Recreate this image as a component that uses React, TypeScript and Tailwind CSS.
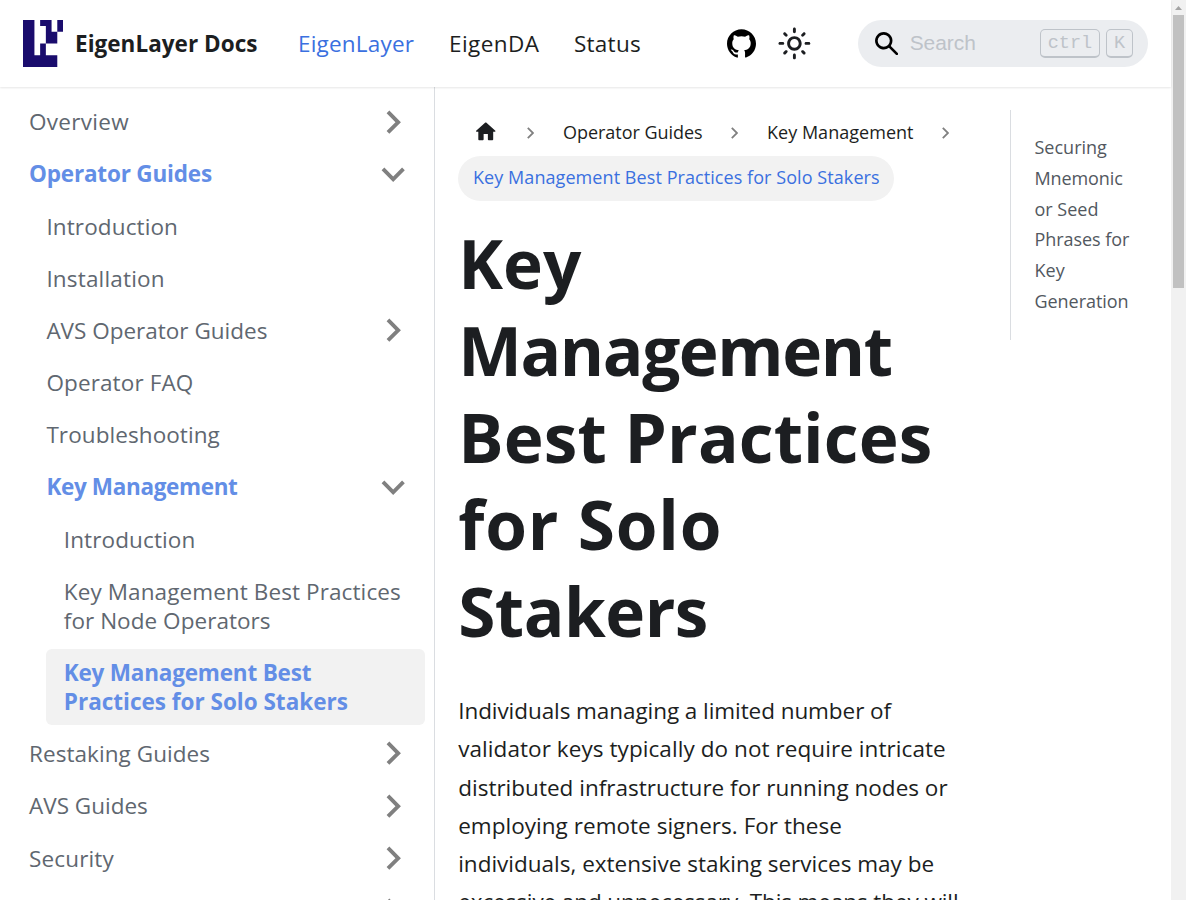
import React from "react";
import { SiGithub } from "react-icons/si";

type Item = {
  lines: [string, string][];
  indent: string;
  caret?: "right" | "down";
  active?: boolean;
  selected?: boolean;
};

const items: Item[] = [
  { lines: [["Overview", "tracking-[0.3px]"]], indent: "ml-[11.6px]", caret: "right" },
  { lines: [["Operator Guides", "tracking-[-0.18px]"]], indent: "ml-[11.6px]", caret: "down", active: true },
  { lines: [["Introduction", "tracking-[0.12px]"]], indent: "ml-[29px]" },
  { lines: [["Installation", "tracking-[0.17px]"]], indent: "ml-[29px]" },
  { lines: [["AVS Operator Guides", "tracking-[0px]"]], indent: "ml-[29px]", caret: "right" },
  { lines: [["Operator FAQ", "tracking-[0.12px]"]], indent: "ml-[29px]" },
  { lines: [["Troubleshooting", "tracking-[0.08px]"]], indent: "ml-[29px]" },
  { lines: [["Key Management", "tracking-[-0.35px]"]], indent: "ml-[29px]", caret: "down", active: true },
  { lines: [["Introduction", "tracking-[0.12px]"]], indent: "ml-[46.4px]" },
  {
    lines: [
      ["Key Management Best Practices", "tracking-[0.1px]"],
      ["for Node Operators", "tracking-[0.05px]"],
    ],
    indent: "ml-[46.4px]",
  },
  {
    lines: [
      ["Key Management Best", "tracking-[-0.2px]"],
      ["Practices for Solo Stakers", "tracking-[0px]"],
    ],
    indent: "ml-[46.4px]",
    active: true,
    selected: true,
  },
  { lines: [["Restaking Guides", "tracking-[0.06px]"]], indent: "ml-[11.6px]", caret: "right" },
  { lines: [["AVS Guides", "tracking-[0px]"]], indent: "ml-[11.6px]", caret: "right" },
  { lines: [["Security", "tracking-[0.15px]"]], indent: "ml-[11.6px]", caret: "right" },
  { lines: [["\u00a0", "tracking-[0px]"]], indent: "ml-[11.6px]", caret: "right" },
];

const heading: [string, string][] = [
  ["Key", "tracking-[0px]"],
  ["Management", "tracking-[-1.4px]"],
  ["Best Practices", "tracking-[0.15px]"],
  ["for Solo", "tracking-[0.85px]"],
  ["Stakers", "tracking-[-0.5px]"],
];

const paragraph: [string, string][] = [
  ["Individuals managing a limited number of", "tracking-[-0.07px]"],
  ["validator keys typically do not require intricate", "tracking-[0.07px]"],
  ["distributed infrastructure for running nodes or", "tracking-[0.01px]"],
  ["employing remote signers. For these", "tracking-[0.03px]"],
  ["individuals, extensive staking services may be", "tracking-[0px]"],
  ["excessive and unnecessary. This means they will", "tracking-[-0.1px]"],
];

const toc: [string, string][] = [
  ["Securing", "tracking-[0px]"],
  ["Mnemonic", "tracking-[-0.1px]"],
  ["or Seed", "tracking-[0px]"],
  ["Phrases for", "tracking-[-0.05px]"],
  ["Key", "tracking-[0.1px]"],
  ["Generation", "tracking-[-0.05px]"],
];

function Lines({ lines }: { lines: [string, string][] }) {
  return (
    <>
      {lines.map(([text, tracking]) => (
        <span key={text} className={`block whitespace-nowrap ${tracking}`}>
          {text}
        </span>
      ))}
    </>
  );
}

function Logo() {
  return (
    <svg className="h-[47px] w-10 shrink-0" viewBox="0 0 7 8" preserveAspectRatio="none" fill="#1a0c6d">
      <path d="M0 0H2V6H3V4H4V6H6V8H0Z M3 0H5V2H6V4H4V1H3Z M6 0H7V2H6Z" />
    </svg>
  );
}

function Caret({ direction }: { direction: "right" | "down" }) {
  return (
    <svg
      className={`-my-2 mr-[8.8px] size-[46.4px] shrink-0 ${direction === "right" ? "rotate-90" : "rotate-180"}`}
      viewBox="0 0 24 24"
      fill="#808080"
    >
      <path d="M7.41 15.41L12 10.83l4.59 4.58L18 14l-6-6-6 6z" />
    </svg>
  );
}

function Sun() {
  return (
    <svg className="size-[34.8px]" viewBox="0 0 24 24" fill="#1c1e21">
      <path d="M12,9c1.65,0,3,1.35,3,3s-1.35,3-3,3s-3-1.35-3-3S10.35,9,12,9 M12,7c-2.76,0-5,2.24-5,5s2.24,5,5,5s5-2.24,5-5 S14.76,7,12,7L12,7z M2,13l2,0c0.55,0,1-0.45,1-1s-0.45-1-1-1l-2,0c-0.55,0-1,0.45-1,1S1.45,13,2,13z M20,13l2,0c0.55,0,1-0.45,1-1 s-0.45-1-1-1l-2,0c-0.55,0-1,0.45-1,1S19.45,13,20,13z M11,2v2c0,0.55,0.45,1,1,1s1-0.45,1-1V2c0-0.55-0.45-1-1-1S11,1.45,11,2z M11,20v2c0,0.55,0.45,1,1,1s1-0.45,1-1v-2c0-0.55-0.45-1-1-1C11.45,19,11,19.45,11,20z M5.99,4.58c-0.39-0.39-1.03-0.39-1.41,0 c-0.39,0.39-0.39,1.03,0,1.41l1.06,1.06c0.39,0.39,1.03,0.39,1.41,0s0.39-1.03,0-1.41L5.99,4.58z M18.36,16.95 c-0.39-0.39-1.03-0.39-1.41,0c-0.39,0.39-0.39,1.03,0,1.41l1.06,1.06c0.39,0.39,1.03,0.39,1.41,0c0.39-0.39,0.39-1.03,0-1.41 L18.36,16.95z M19.42,5.99c0.39-0.39,0.39-1.03,0-1.41c-0.39-0.39-1.03-0.39-1.41,0l-1.06,1.06c-0.39,0.39-0.39,1.03,0,1.41 s1.03,0.39,1.41,0L19.42,5.99z M7.05,18.36c0.39-0.39,0.39-1.03,0-1.41c-0.39-0.39-1.03-0.39-1.41,0l-1.06,1.06 c-0.39,0.39-0.39,1.03,0,1.41s1.03,0.39,1.41,0L7.05,18.36z" />
    </svg>
  );
}

function SearchIcon() {
  return (
    <svg className="size-[23.2px] shrink-0" viewBox="0 0 16 16">
      <path d="M6.02945,10.20327a4.17382,4.17382,0,1,1,4.17382-4.17382A4.15609,4.15609,0,0,1,6.02945,10.20327Zm9.69195,4.2199L10.8989,9.59979A5.88021,5.88021,0,0,0,12.058,6.02856,6.00467,6.00467,0,1,0,9.59979,10.8989l4.82338,4.82338a.89729.89729,0,0,0,1.29912,0,.89749.89749,0,0,0-.00087-1.29909Z" />
    </svg>
  );
}

function Separator() {
  return (
    <svg className="h-[12px] w-[7px] shrink-0" viewBox="0 0 7 12" fill="none" stroke="#808080" strokeWidth="1.8">
      <path d="M0.8 0.8L6 6L0.8 11.2" />
    </svg>
  );
}

const kbd =
  "flex h-[29px] items-center justify-center rounded-[5px] border border-b-2 border-[#bec3c9] pt-px font-['Liberation_Mono',monospace] text-[18.56px] text-[#bec3c9]";

export default function App() {
  return (
    <div className="flex h-[900px] w-full overflow-hidden bg-white font-['Open_Sans',sans-serif] text-[22.5px] text-[#1c1e21] antialiased">
      <div className="flex min-w-0 flex-1 flex-col">
        <header className="relative z-10 flex h-[87px] shrink-0 items-center bg-white pl-[23px] pr-[23px] shadow-[0_1px_2px_0_rgba(0,0,0,0.1)]">
          <Logo />
          <b className="ml-[12px] w-[221px] whitespace-nowrap font-bold tracking-[0.03px]">EigenLayer Docs</b>
          <nav className="flex">
            <a className="w-[153px] pl-[2px] tracking-[0.2px] text-[#3a70e0]">EigenLayer</a>
            <a className="w-[125px] tracking-[0.45px]">EigenDA</a>
            <a className="tracking-[0.25px]">Status</a>
          </nav>
          <div className="ml-auto flex items-center">
            <SiGithub className="size-[29px] text-black" />
            <div className="ml-[21px] mr-[46.5px]">
              <Sun />
            </div>
            <div className="flex h-[47px] w-[290px] items-center rounded-full bg-[#ebedf0] pl-[17px] pr-[15px]">
              <SearchIcon />
              <span className="ml-[11.5px] flex-1 font-['Liberation_Sans',sans-serif] text-[20.88px] leading-none text-[#bec3c9]">
                Search
              </span>
              <kbd className={`w-[60px] ${kbd}`}>ctrl</kbd>
              <kbd className={`ml-[6px] w-[27px] ${kbd}`}>K</kbd>
            </div>
          </div>
        </header>
        <div className="flex min-h-0 flex-1">
          <aside className="flex w-[435px] shrink-0 flex-col gap-[5.8px] overflow-hidden border-r border-[#dadde1] pr-[9px] pt-[11.6px]">
            {items.map((item, i) => (
              <div
                key={i}
                className={`flex shrink-0 items-center rounded-[5.8px] leading-[29px] ${item.indent} ${
                  item.active ? "font-bold text-[#638ee6]" : "text-[#606770]"
                } ${item.selected ? "bg-[#f2f2f2]" : ""}`}
              >
                <div className="flex-1 py-[8.7px] pl-[17.4px]">
                  <Lines lines={item.lines} />
                </div>
                {item.caret && <Caret direction={item.caret} />}
              </div>
            ))}
          </aside>
          <main className="w-[576px] shrink-0 overflow-hidden pl-[23.2px] pt-[23.2px]">
            <nav className="text-[18px] leading-[30.6px]">
              <div className="flex h-[45px] items-center whitespace-nowrap pl-[14.8px]">
                <svg className="mr-[28.7px] size-[25.5px] shrink-0 -translate-y-px" viewBox="0 0 24 24" fill="#1c1e21">
                  <path d="M10 19v-5h4v5c0 .55.45 1 1 1h3c.55 0 1-.45 1-1v-7h1.7c.46 0 .68-.57.33-.87L12.67 3.6c-.38-.34-.96-.34-1.34 0l-8.36 7.53c-.34.3-.13.87.33.87H5v7c0 .55.45 1 1 1h3c.55 0 1-.45 1-1z" />
                </svg>
                <Separator />
                <span className="ml-[28.8px] w-[168.2px] tracking-[-0.03px]">Operator Guides</span>
                <Separator />
                <span className="ml-[28.8px] w-[175.2px] tracking-[0.03px]">Key Management</span>
                <Separator />
              </div>
              <div className="mt-[0.5px] flex h-[45px] w-[436px] items-center whitespace-nowrap rounded-full bg-[#f2f2f2] pb-px pl-[14.8px] tracking-[0.07px] text-[#3a70e0]">
                Key Management Best Practices for Solo Stakers
              </div>
            </nav>
            <h1 className="mt-[19.5px] text-[67.5px] font-bold leading-[87px]">
              <Lines lines={heading} />
            </h1>
            <p className="mt-[36.8px] leading-[38.28px]">
              <Lines lines={paragraph} />
            </p>
          </main>
          <div className="pt-[23.2px]">
            <div className="ml-[-1px] h-[230px] border-l border-[#dadde1] py-[22px] pl-[23.5px] text-[18px] leading-[30.7px] text-[#525860]">
              <Lines lines={toc} />
            </div>
          </div>
        </div>
      </div>
      <div className="flex w-[15px] shrink-0 flex-col items-center bg-[#f1f1f1]">
        <svg className="h-[15px] w-[15px] shrink-0" viewBox="0 0 15 15" fill="#a3a3a3">
          <path d="M4 10L7.5 6L11 10Z" />
        </svg>
        <div className="h-[273px] w-[11px] bg-[#c1c1c1]" />
      </div>
    </div>
  );
}
